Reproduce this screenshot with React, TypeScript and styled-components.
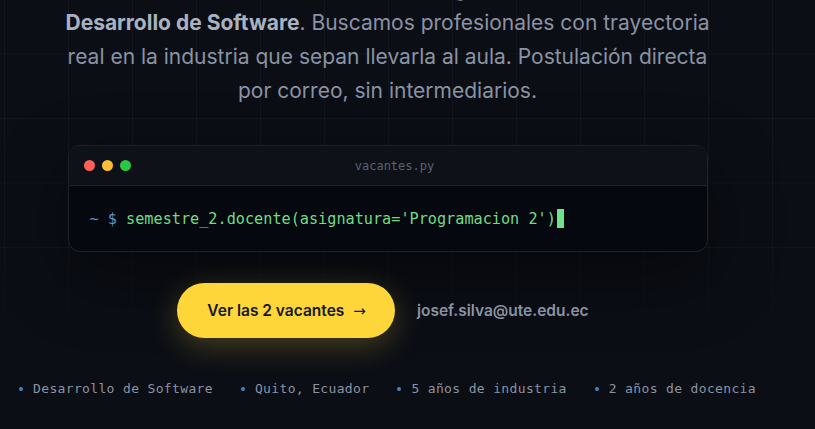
import React from 'react'
import styled, {createGlobalStyle} from 'styled-components'

const Global = createGlobalStyle`
  html, body {
    margin: 0;
    padding: 0;
    background: #0b0e15;
    overflow: hidden;
  }
  * { box-sizing: border-box; }
`

const Page = styled.div`
  position: relative;
  width: 815px;
  height: 429px;
  overflow: hidden;
  background-color: #0b0e15;

  &::before {
    content: '';
    position: absolute;
    inset: 0;
    background-image:
      linear-gradient(to right, rgba(255, 255, 255, 0.035) 1px, transparent 1px),
      linear-gradient(to bottom, rgba(255, 255, 255, 0.035) 1px, transparent 1px);
    background-size: 64px 64.5px;
    background-position: 4px -11px;
    -webkit-mask-image: linear-gradient(to bottom, #000 0%, #000 55%, transparent 80%);
    mask-image: linear-gradient(to bottom, #000 0%, #000 55%, transparent 80%);
    pointer-events: none;
  }
`

const Hero = styled.section`
  position: relative;
  width: 775px;
  display: flex;
  flex-direction: column;
  align-items: center;
`

const Lead = styled.p`
  margin: -28px 0 0;
  width: 720px;
  text-align: center;
  font-family: Inter, "Noto Sans", sans-serif;
  font-size: 21px;
  line-height: 34px;
  color: #8a93a4;
  white-space: nowrap;

  strong {
    color: #a9b2c1;
    font-weight: 700;
  }
`

const Terminal = styled.div`
  margin-top: 37px;
  width: 640px;
  border: 1px solid #1d222b;
  border-radius: 12px;
  background: #05080e;
  overflow: hidden;
  box-shadow: 0 24px 70px rgba(0, 0, 0, 0.45);
`

const TermHead = styled.div`
  display: flex;
  align-items: center;
  height: 40px;
  padding: 0 48px 0 15px;
  background: #0e1118;
  border-bottom: 1px solid #1d222b;
`

const Dots = styled.div`
  display: flex;
  gap: 7px;
`

const Dot = styled.span<{ $c: string }>`
  width: 11px;
  height: 11px;
  border-radius: 50%;
  background: ${p => p.$c};
`

const TermTitle = styled.div`
  flex: 1;
  text-align: center;
  font-family: "DejaVu Sans Mono", monospace;
  font-size: 12px;
  color: #5a616d;
`

const TermBody = styled.div`
  display: flex;
  align-items: center;
  height: 65px;
  padding: 0 21px;
  font-family: "DejaVu Sans Mono", monospace;
  font-size: 15.2px;
  white-space: pre;
`

const Prompt = styled.span`
  color: #5d93c6;
`

const Code = styled.span`
  color: #72dc84;
`

const Cursor = styled.span`
  display: inline-block;
  width: 7px;
  height: 19px;
  margin-left: 1px;
  background: #6fe28a;
`

const Actions = styled.div`
  margin-top: 31px;
  display: flex;
  align-items: center;
  gap: 22px;
  margin-left: -9px;
`

const Cta = styled.a`
  display: inline-flex;
  align-items: center;
  gap: 9px;
  height: 55px;
  padding: 0 29px 0 30px;
  border-radius: 999px;
  background: #fed63a;
  color: #151820;
  font-family: Inter, "Noto Sans", sans-serif;
  font-size: 15.5px;
  font-weight: 600;
  text-decoration: none;
  box-shadow: 0 8px 30px rgba(254, 214, 58, 0.25);
`

const Arrow = styled.span`
  font-family: "DejaVu Sans", sans-serif;
  font-size: 15px;
  font-weight: 400;
`

const Mail = styled.a`
  font-family: Inter, "Noto Sans", sans-serif;
  font-size: 15.5px;
  font-weight: 600;
  color: #8a93a3;
  text-decoration: none;
`

const Meta = styled.ul`
  margin: 41px 0 0;
  padding: 0;
  list-style: none;
  display: flex;
  gap: 28px;
  font-family: "DejaVu Sans Mono", monospace;
  font-size: 13px;
  letter-spacing: 0.35px;
  line-height: 20px;
  color: #8a93a2;
`

const MetaItem = styled.li`
  display: flex;
  align-items: center;
  gap: 10px;

  &::before {
    content: '';
    width: 4px;
    height: 4px;
    border-radius: 50%;
    background: #3f86c4;
  }
`

const facts = ['Desarrollo de Software', 'Quito, Ecuador', '5 años de industria', '2 años de docencia']

export default function App() {
    return (
        <Page>
            <Global/>
            <Hero>
                <Lead>
                    Abrimos convocatoria docente para el segundo semestre, carrera de
                    <br/>
                    <strong>Desarrollo de Software</strong>. Buscamos profesionales con trayectoria
                    <br/>
                    real en la industria que sepan llevarla al aula. Postulación directa
                    <br/>
                    por correo, sin intermediarios.
                </Lead>

                <Terminal>
                    <TermHead>
                        <Dots>
                            <Dot $c="#ff5f57"/>
                            <Dot $c="#febc2e"/>
                            <Dot $c="#28c840"/>
                        </Dots>
                        <TermTitle>vacantes.py</TermTitle>
                    </TermHead>
                    <TermBody>
                        <Prompt>~ $ </Prompt>
                        <Code>semestre_2.docente(asignatura='Programacion 2')</Code>
                        <Cursor/>
                    </TermBody>
                </Terminal>

                <Actions>
                    <Cta href="#vacantes">Ver las 2 vacantes <Arrow>→</Arrow></Cta>
                    <Mail href="mailto:josef.silva@ute.edu.ec">josef.silva@ute.edu.ec</Mail>
                </Actions>

                <Meta>
                    {facts.map(f => <MetaItem key={f}>{f}</MetaItem>)}
                </Meta>
            </Hero>
        </Page>
    )
}
